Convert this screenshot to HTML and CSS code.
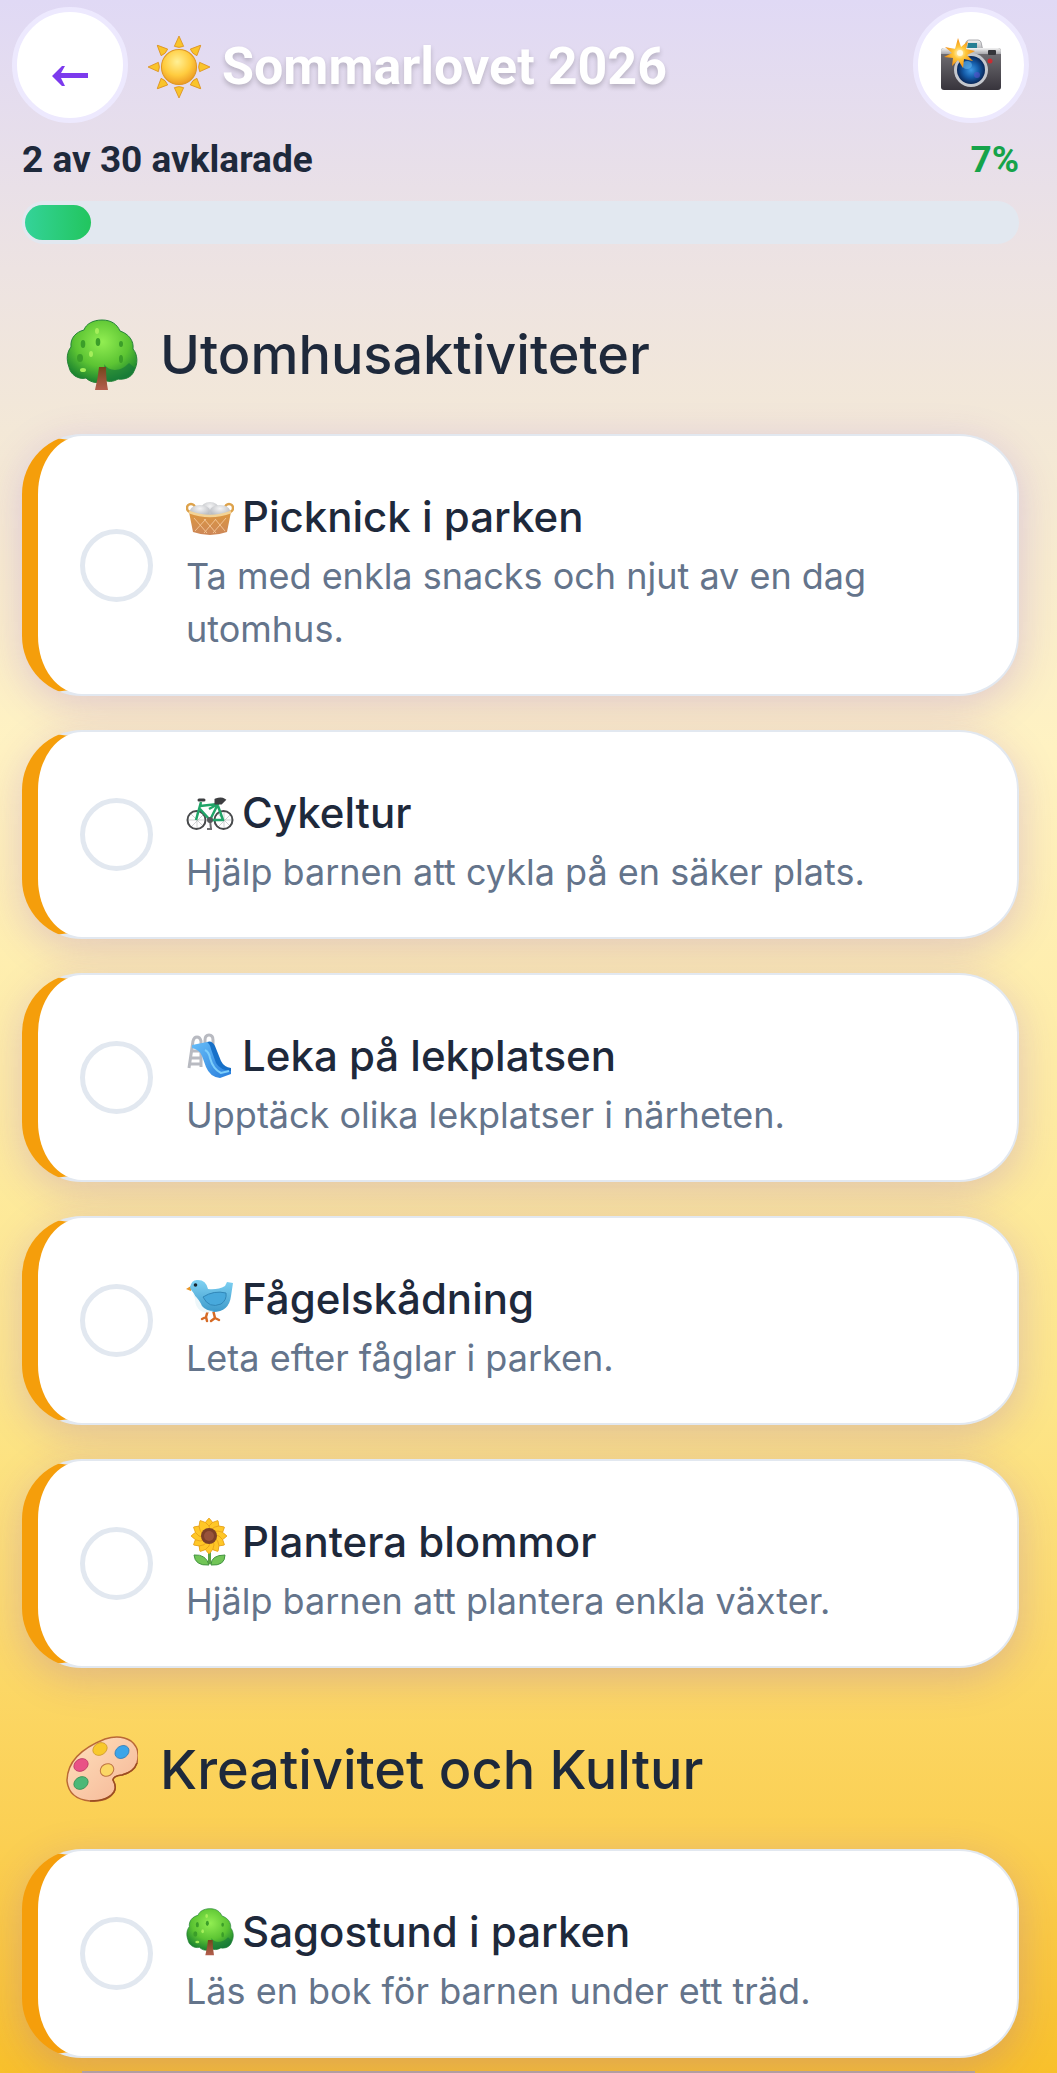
FILE: index.html
```html
<!DOCTYPE html>
<html lang="sv">
<head>
<meta charset="utf-8">
<meta name="viewport" content="width=device-width, initial-scale=1">
<title>Sommarlovet 2026</title>
<link rel="stylesheet" href="styles.css">
</head>
<body>
<svg class="defs" aria-hidden="true">
  <defs>
    <radialGradient id="leaf" cx=".5" cy=".35" r=".65"><stop offset="0" stop-color="#92ee52"/><stop offset=".6" stop-color="#5cc433"/><stop offset="1" stop-color="#1c842f"/></radialGradient>
    <linearGradient id="trunk" x2="0" y2="1"><stop offset="0" stop-color="#75451c"/><stop offset="1" stop-color="#b55e4e"/></linearGradient>
    <radialGradient id="sun" cx=".45" cy=".35" r=".65"><stop offset="0" stop-color="#fff095"/><stop offset=".6" stop-color="#ffcc3f"/><stop offset="1" stop-color="#ed9b22"/></radialGradient>
    <linearGradient id="body" x2="0" y2="1"><stop offset="0" stop-color="#777579"/><stop offset="1" stop-color="#37343c"/></linearGradient>
    <linearGradient id="silver" x2="0" y2="1"><stop offset="0" stop-color="#f3f3f3"/><stop offset="1" stop-color="#a8a8ac"/></linearGradient>
    <radialGradient id="lens"><stop offset="0" stop-color="#3f9be6"/><stop offset=".55" stop-color="#145ba8"/><stop offset="1" stop-color="#092759"/></radialGradient>
    <radialGradient id="flash"><stop offset="0" stop-color="#fffbe0"/><stop offset=".4" stop-color="#ffc83a"/><stop offset="1" stop-color="#f18a12"/></radialGradient>
    <linearGradient id="wicker" x2="0" y2="1"><stop offset="0" stop-color="#dc973f"/><stop offset="1" stop-color="#cd8758"/></linearGradient>
    <radialGradient id="egg" cx=".5" cy=".3" r=".7"><stop offset="0" stop-color="#f5f5f6"/><stop offset="1" stop-color="#afb2b7"/></radialGradient>
    <linearGradient id="chute" y2="1"><stop offset="0" stop-color="#67bdf8"/><stop offset="1" stop-color="#287edc"/></linearGradient>
    <linearGradient id="feather" x2="0" y2="1"><stop offset="0" stop-color="#80d2f3"/><stop offset="1" stop-color="#3d9acb"/></linearGradient>
    <linearGradient id="wood" x2="1" y2="1"><stop offset="0" stop-color="#ffe1bd"/><stop offset="1" stop-color="#f5b595"/></linearGradient>
    <symbol id="tree" viewBox="0 0 72 72">
      <path d="M36 1c9 0 15 4 18 11 9 3 14 10 13 18 5 6 5 15 1 22-2 6-9 9-16 8-5 3-10 3-14 1-5 4-13 3-18-2-8 2-16-4-17-11-3-8-2-15 2-20-1-9 5-15 13-17C20 5 27 1 36 1z" fill="url(#leaf)" stroke="#238237"/>
      <path d="M34 52c4-2 5-5 4-7 5 8 17 8 25-1l6 5c-2 8-10 12-17 11-7 3-14 2-18-1z" fill="#15763c" opacity=".6"/>
      <path d="M33 48h7q0 13 2 23H29q3-12 4-23z" fill="url(#trunk)"/>
      <g fill="#3b9e29"><ellipse cx="17" cy="25" rx="2.300" ry="4"/><ellipse cx="32" cy="23" rx="2.300" ry="4"/><ellipse cx="55" cy="25" rx="2" ry="3"/><ellipse cx="14" cy="39" rx="3" ry="4"/><ellipse cx="55" cy="40" rx="2" ry="4"/></g>
      <g fill="#a5ee5b"><ellipse cx="31" cy="12" rx="2" ry="3"/><ellipse cx="25" cy="35" rx="2" ry="3"/><ellipse cx="17" cy="51" rx="3" ry="2"/></g>
    </symbol>
    <symbol id="ray" viewBox="0 0 60 60"><path d="M30 0l4.500 10q-4.500 2-9 0z" fill="#f9c42b" stroke="#dc9020" stroke-width=".8"/></symbol>
    <symbol id="petal" viewBox="0 0 48 48"><path d="M23 19q-10-10 0-19 10 9 0 19z" fill="#ffc727" stroke="#e39a17" stroke-width=".7"/></symbol>
  </defs>
</svg>

<header class="topbar">
  <button class="round" type="button" aria-label="Tillbaka">
    <svg class="arrow" viewBox="0 0 38 22"><path d="M1 11L11 1h3l-4 7h27v5H10l4 8h-3z" fill="#7c3aed"/></svg>
  </button>
  <h1 class="title">
    <svg class="sun" viewBox="0 0 60 62" aria-hidden="true"><g transform="translate(0 1)"><circle cx="30" cy="30" r="17" fill="url(#sun)" stroke="#dd9626"/><use href="#ray" width="60" height="60"/><use href="#ray" width="60" height="60" transform="rotate(45 30 30)"/><use href="#ray" width="60" height="60" transform="rotate(90 30 30)"/><use href="#ray" width="60" height="60" transform="rotate(135 30 30)"/><use href="#ray" width="60" height="60" transform="rotate(180 30 30)"/><use href="#ray" width="60" height="60" transform="rotate(225 30 30)"/><use href="#ray" width="60" height="60" transform="rotate(270 30 30)"/><use href="#ray" width="60" height="60" transform="rotate(315 30 30)"/></g></svg>
    <span>Sommarlovet 2026</span>
  </h1>
  <button class="round" type="button" aria-label="Kamera">
    <svg class="camera" viewBox="0 0 62 54"><path d="M24 13l2-9q1-2 3-2h9q2 0 3 2l2 9z" fill="url(#silver)" stroke="#8d8d92" stroke-width=".7"/><path d="M28 5h9v6H27z" fill="#267f94"/><rect x="1" y="10" width="60" height="42" rx="3" fill="url(#body)"/><path d="M1 16v-3q0-3 3-3h54q3 0 3 3v3z" fill="url(#silver)"/><rect x="48" y="12" width="8" height="5" rx="1" fill="#34353a"/><circle cx="50" cy="23" r="2.500" fill="#c92c32"/><circle cx="31" cy="32" r="17" fill="#c4c7cd"/><circle cx="31" cy="32" r="14" fill="url(#lens)"/><ellipse cx="27" cy="27" rx="5" ry="4" fill="#63b5ed" opacity=".6"/><circle cx="37" cy="37" r="3" fill="#5851cb" opacity=".6"/><path d="M18 0l3 9 7-6-2 8 9 2-8 4 6 6-9-2-1 9-5-8-6 6 1-8-9-1 8-4-7-6 10 2z" fill="url(#flash)"/><circle cx="20" cy="15" r="3" fill="#fffbe0"/></svg>
  </button>
</header>

<section class="progress" aria-label="Framsteg">
  <div class="progress-text"><span>2 av 30 avklarade</span><span class="percent">7%</span></div>
  <div class="track"><div class="fill" style="width:6.67%"></div></div>
</section>

<main class="content">
  <section>
    <h2 class="heading"><svg class="heading-icon" aria-hidden="true"><use href="#tree"/></svg><span>Utomhusaktiviteter</span></h2>
    <ul class="list">
      <li><label class="card"><input class="tick" type="checkbox"><span class="copy"><span class="name"><svg class="emoji" viewBox="0 0 48 48" aria-hidden="true"><circle cx="5" cy="15" r="4" fill="none" stroke="#dda24b" stroke-width="2.500"/><circle cx="43" cy="15" r="4" fill="none" stroke="#dda24b" stroke-width="2.500"/><ellipse cx="24" cy="16" rx="9" ry="7" fill="url(#egg)"/><ellipse cx="14" cy="18" rx="10" ry="6" fill="url(#egg)"/><ellipse cx="34" cy="18" rx="10" ry="6" fill="url(#egg)"/><path d="M3 19q21 8 42 0l-4 20q-17 6-34 0z" fill="url(#wicker)"/><path d="M8 25l13 15M18 26l12 14M29 26l10 12M40 25L27 40M30 26L18 40M20 26L9 38" stroke="#f2c392" stroke-width="1" fill="none"/><path d="M3 19q21 8 42 0" stroke="#f3d396" stroke-width="2.500" fill="none"/></svg><span>Picknick i parken</span></span><span class="desc">Ta med enkla snacks och njut av en dag utomhus.</span></span></label></li>
      <li><label class="card"><input class="tick" type="checkbox"><span class="copy"><span class="name"><svg class="emoji" viewBox="0 0 48 48" aria-hidden="true"><g fill="none" stroke="#aeb2b3" stroke-width=".6"><path d="M2 31h18M11 22v18M5 25l13 13M5 38l13-13M29 31h18M38 22v18M32 25l13 13M32 38l13-13"/></g><circle cx="10.500" cy="31" r="9" fill="none" stroke="#484a4c" stroke-width="2"/><circle cx="37.500" cy="31" r="9" fill="none" stroke="#484a4c" stroke-width="2"/><path d="M10 31l5-18M14 17l18-2M14 20l10 11 8-16-9 5M24 31h13l-5-14" stroke="#20a568" stroke-width="2.500" fill="none" stroke-linejoin="round"/><path d="M13 11h5M30 11q5-2 8 0l-3 3h-5z" stroke="#3d3e41" stroke-width="3" fill="#3d3e41" stroke-linecap="round"/><path d="M24 31l1 9M21 40h5" stroke="#6d6e70" stroke-width="2"/><circle cx="24" cy="31" r="3" fill="#55585a"/></svg><span>Cykeltur</span></span><span class="desc">Hjälp barnen att cykla på en säker plats.</span></span></label></li>
      <li><label class="card"><input class="tick" type="checkbox"><span class="copy"><span class="name"><svg class="emoji" viewBox="0 0 48 48" aria-hidden="true"><path d="M19 13V8q0-5 4-5t4 5v12M3 36L7 9q1-4 4-4t4 4v26M6 19h10M5 26h10M4 32h10" fill="none" stroke="#b8bac1" stroke-width="3"/><path d="M6 13l15-3q6 1 7 7l5 15q2 4 12 5v5l-11 4q-10-1-14-11l-4-11q-2-6-10-8z" fill="url(#chute)"/><path d="M21 10q5-2 8 4l6 15q3 6 10 7v3q-11-1-15-8l-5-14q-1-5-4-7z" fill="#1770c8"/><path d="M19 18q4 2 5 8 3 11 11 15l8-2" stroke="#7dcefa" stroke-width="2" fill="none"/></svg><span>Leka på lekplatsen</span></span><span class="desc">Upptäck olika lekplatser i närheten.</span></span></label></li>
      <li><label class="card"><input class="tick" type="checkbox"><span class="copy"><span class="name"><svg class="emoji" viewBox="0 0 48 48" aria-hidden="true"><path d="M22 35l-2 7-4 2m4-2l1 4m6-11l2 8-4 3m4-3 4 2" fill="none" stroke="#d66b26" stroke-width="2.500" stroke-linecap="round"/><path d="M5 11l-5 3 5 2z" fill="#e99425"/><path d="M4 12Q6 4 12 5q8 0 10 9 10 1 17-3l2-4 6 1-2 13q-2 16-18 16-14 1-17-12-1-6-4-9-2-2-2-4z" fill="url(#feather)"/><path d="M7 19q6 5 9 12 4 5 12 5-7 3-13 0-6-4-6-12z" fill="#edf7fa"/><path d="M17 22q11-7 23-4 1 7-5 11-12 5-18-7z" fill="#48a9dc" stroke="#3187b8"/><circle cx="9.500" cy="10" r="1.800" fill="#18262f"/></svg><span>Fågelskådning</span></span><span class="desc">Leta efter fåglar i parken.</span></span></label></li>
      <li><label class="card"><input class="tick" type="checkbox"><span class="copy"><span class="name"><svg class="emoji" viewBox="0 0 48 48" aria-hidden="true"><path d="M22 30h3v16h-3z" fill="#5ba245"/><path d="M23 47Q9 48 8 37q12-1 15 10zM25 47q0-10 14-10 0 11-14 10z" fill="#72c557" stroke="#449442"/><g><use href="#petal" width="48" height="48"/><use href="#petal" width="48" height="48" transform="rotate(30 23 18)"/><use href="#petal" width="48" height="48" transform="rotate(60 23 18)"/><use href="#petal" width="48" height="48" transform="rotate(90 23 18)"/><use href="#petal" width="48" height="48" transform="rotate(120 23 18)"/><use href="#petal" width="48" height="48" transform="rotate(150 23 18)"/><use href="#petal" width="48" height="48" transform="rotate(180 23 18)"/><use href="#petal" width="48" height="48" transform="rotate(210 23 18)"/><use href="#petal" width="48" height="48" transform="rotate(240 23 18)"/><use href="#petal" width="48" height="48" transform="rotate(270 23 18)"/><use href="#petal" width="48" height="48" transform="rotate(300 23 18)"/><use href="#petal" width="48" height="48" transform="rotate(330 23 18)"/></g><circle cx="23" cy="18" r="8" fill="#7c4028"/><circle cx="23" cy="18" r="5" fill="#98533b"/></svg><span>Plantera blommor</span></span><span class="desc">Hjälp barnen att plantera enkla växter.</span></span></label></li>
    </ul>
  </section>
  <section>
    <h2 class="heading"><svg class="heading-icon" viewBox="0 0 72 72" aria-hidden="true"><path d="M39 5q15-5 26 2 10 8 6 22-3 9-15 12-9 1-9 5 4 7 1 12-6 10-24 9Q3 65 1 47 1 20 39 5z" fill="url(#wood)" stroke="#b96836" stroke-width="1.500"/><path d="M71 29q-3 9-15 12-9 1-9 5 4 7 1 12-6 9-24 9" fill="none" stroke="#9b4d22" stroke-width="1.500"/><ellipse cx="41" cy="36" rx="7" ry="6" transform="rotate(-30 41 36)" fill="#fbd766" stroke="#bd7442"/><g stroke-width=".7"><ellipse cx="34" cy="15" rx="7.500" ry="6" transform="rotate(-30 34 15)" fill="#f8c92c" stroke="#c9962b"/><ellipse cx="56" cy="18" rx="7.500" ry="6" transform="rotate(-35 56 18)" fill="#3ba5e9" stroke="#2a77b2"/><ellipse cx="15" cy="31" rx="7.500" ry="6" transform="rotate(-30 15 31)" fill="#e95286" stroke="#b5335e"/><ellipse cx="15" cy="49" rx="7.500" ry="6" transform="rotate(-30 15 49)" fill="#4cb877" stroke="#348a50"/></g></svg><span>Kreativitet och Kultur</span></h2>
    <ul class="list">
      <li><label class="card"><input class="tick" type="checkbox"><span class="copy"><span class="name"><svg class="emoji" aria-hidden="true"><use href="#tree"/></svg><span>Sagostund i parken</span></span><span class="desc">Läs en bok för barnen under ett träd.</span></span></label></li>
    </ul>
  </section>
  <hr class="edge">
</main>
</body>
</html>
```
FILE: styles.css
```css
* { box-sizing: border-box; }
body {
  margin: 0;
  min-height: 100vh;
  color: #1e293b;
  font-family: Inter, "Noto Sans", sans-serif;
  background: linear-gradient(#e0d9f5 0%, #ede3e2 13%, #fff2c2 36%, #fde68a 67%, #fbcf52 89%, #f8c02b 100%);
}
.defs { position: absolute; width: 0; height: 0; }
.topbar { display: flex; align-items: center; padding: 7px 28px 0 12px; }
.round {
  display: flex; align-items: center; justify-content: center; flex: none;
  width: 116px; height: 116px; padding: 0;
  border: 5px solid #ede9fe; border-radius: 50%; background: #fff;
}
.arrow { width: 38px; height: 22px; margin-top: 22px; }
.camera { width: 62px; height: 54px; }
.title {
  display: flex; align-items: center; flex: 1; gap: 12px; margin: 4px 0 0 20px;
  color: #fff; font: 700 52px/64px Roboto, sans-serif;
  text-shadow: 0 3px 5px rgb(0 0 0 / 20%);
}
.sun { width: 62px; height: 64px; }
.progress { padding: 13px 38px 0 22px; }
.progress-text { display: flex; justify-content: space-between; font: 700 37px/48px Roboto, sans-serif; }
.percent { color: #16a34a; }
.track { height: 43px; margin-top: 17px; padding: 4px 3px; border-radius: 22px; background: #e2e8f0; }
.fill { height: 100%; border-radius: 18px; background: linear-gradient(90deg, #34d399, #22c55e); }
.content { padding-top: 9px; }
.heading {
  display: flex; align-items: center; gap: 22px;
  height: 181px; margin: 0; padding: 30px 38px 7px 66px;
  font-size: 54px; line-height: 70px; font-weight: 500;
}
.heading-icon { width: 72px; height: 72px; flex: none; }
.list { display: grid; gap: 34px; margin: 0; padding: 0 38px 0 22px; list-style: none; }
.card {
  display: flex; align-items: center; gap: 33px;
  padding: 38px 44px 38px 42px;
  border: 2px solid #e2e8f0; border-left: 16px solid #f59e0b; border-radius: 60px;
  background: #fff; box-shadow: 0 10px 40px rgb(124 58 237 / 22%);
}
.tick { appearance: none; flex: none; width: 73px; height: 73px; margin: 0; border: 5px solid #e2e8f0; border-radius: 50%; background: #fff; }
.copy { display: block; padding-top: 16px; }
.name { display: flex; align-items: center; gap: 8px; margin-bottom: 6px; font-size: 42px; line-height: 54px; font-weight: 500; }
.emoji { width: 48px; height: 48px; flex: none; }
.desc { display: block; font-size: 36px; line-height: 53px; color: #64748b; }
.edge { height: 2px; margin: 13px 82px 0; border: 0; background: #b9a99a; }
```
